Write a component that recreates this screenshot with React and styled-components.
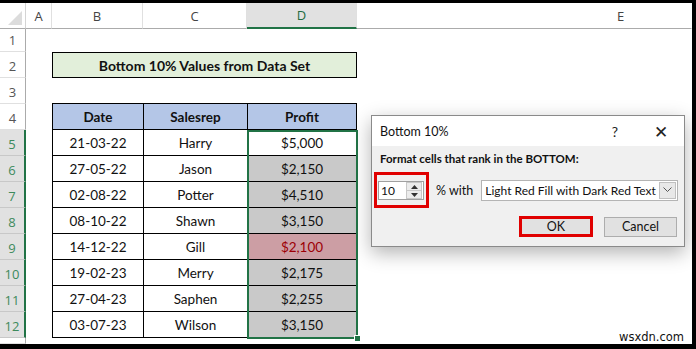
import React from "react";
import styled, { createGlobalStyle } from "styled-components";

const GlobalStyle = createGlobalStyle`
  html, body {
    margin: 0;
    padding: 0;
    background: #000;
  }
`;

const rows = [
  { date: "21-03-22", rep: "Harry", profit: "$5,000", kind: "plain" },
  { date: "27-05-22", rep: "Jason", profit: "$2,150", kind: "grey" },
  { date: "02-08-22", rep: "Potter", profit: "$4,510", kind: "grey" },
  { date: "08-10-22", rep: "Shawn", profit: "$3,150", kind: "grey" },
  { date: "14-12-22", rep: "Gill", profit: "$2,100", kind: "red" },
  { date: "19-02-23", rep: "Merry", profit: "$2,175", kind: "grey" },
  { date: "27-04-23", rep: "Saphen", profit: "$2,255", kind: "grey" },
  { date: "03-07-23", rep: "Wilson", profit: "$3,150", kind: "grey" },
];

const Frame = styled.div`
  width: 696px;
  height: 349px;
  background: #000;
  padding: 3px 4px 5px 0;
  box-sizing: border-box;
`;

const Screen = styled.div`
  position: relative;
  width: 100%;
  height: 100%;
  background: #fff;
  overflow: hidden;
  font-family: Lato, "Liberation Sans", sans-serif;
`;

const Sheet = styled.div`
  display: grid;
  grid-template-columns: 26px 26px 91px 104px 110px 1fr;
  grid-template-rows: 26px 23px repeat(11, 26px) 1fr;
  height: 100%;
`;

const Corner = styled.div`
  position: relative;
  border-right: 1px solid #d4d4d4;
  border-bottom: 1px solid #ababab;
  &::after {
    content: "";
    position: absolute;
    right: 3px;
    bottom: 3px;
    border-style: solid;
    border-width: 0 0 14px 14px;
    border-color: transparent transparent #dcdcdc transparent;
  }
`;

const ColHead = styled.div`
  display: flex;
  align-items: center;
  justify-content: ${(p) => (p.$wide ? "flex-start" : "center")};
  padding-left: ${(p) => (p.$wide ? "260px" : "0")};
  font-family: "Open Sans", "Liberation Sans", sans-serif;
  font-size: 13px;
  color: ${(p) => (p.$active ? "#1e6b3f" : "#444")};
  background: ${(p) => (p.$active ? "#e1e1e1" : "#fff")};
  border-right: 1px solid ${(p) => (p.$wide ? "transparent" : "#e0e0e0")};
  border-bottom: ${(p) => (p.$active ? "2px solid #217346" : "1px solid #ababab")};
  box-sizing: border-box;
`;

const RowHead = styled.div`
  grid-column: 1;
  display: flex;
  align-items: flex-end;
  justify-content: center;
  padding-bottom: 2px;
  box-sizing: border-box;
  font-family: "Open Sans", "Liberation Sans", sans-serif;
  font-size: 13px;
  color: ${(p) => (p.$active ? "#3d8a5c" : "#555")};
  background: ${(p) => (p.$active ? "#e1e1e1" : "#fff")};
  border-bottom: 1px solid ${(p) => (p.$active ? "#c8c8c8" : "#e0e0e0")};
  border-right: ${(p) => (p.$active ? "2px solid #217346" : "1px solid #ababab")};
`;

const TitleBox = styled.div`
  grid-column: 3 / span 3;
  grid-row: 3;
  display: flex;
  align-items: center;
  justify-content: center;
  background: #e2efda;
  border: 1px solid #000;
  font-size: 14px;
  font-weight: 700;
  color: #111;
`;

const Table = styled.div`
  position: relative;
  grid-column: 3 / span 3;
  grid-row: 5 / span 9;
  display: grid;
  grid-template-columns: 90px 103px 1fr;
  grid-auto-rows: 1fr;
  gap: 1px;
  padding: 1px;
  margin-top: -1px;
  background: #000;
  align-self: stretch;
`;

const cellBg = {
  head: "#b4c6e7",
  plain: "#fff",
  grey: "#c9c9c9",
  red: "#cc9ea4",
};

const Cell = styled.div`
  display: flex;
  align-items: center;
  justify-content: center;
  font-size: 13.5px;
  font-weight: ${(p) => (p.$kind === "head" ? 700 : 400)};
  color: ${(p) => (p.$kind === "red" ? "#9c0006" : "#111")};
  background: ${(p) => cellBg[p.$kind] || "#fff"};
`;

const Selection = styled.div`
  position: absolute;
  left: 195px;
  right: -1px;
  top: 27px;
  bottom: -1px;
  border: 2px solid #217346;
  pointer-events: none;
  &::after {
    content: "";
    position: absolute;
    right: -5px;
    bottom: -5px;
    width: 5px;
    height: 5px;
    background: #217346;
    border: 1px solid #fff;
  }
`;

const Dialog = styled.div`
  position: absolute;
  left: 371px;
  top: 112px;
  width: 314px;
  height: 132px;
  background: #f0f0f0;
  border: 1px solid #8a8a8a;
  box-shadow: 0 6px 18px rgba(0, 0, 0, 0.3);
  font-family: Lato, "Liberation Sans", sans-serif;
  font-size: 12px;
  color: #111;
  display: flex;
  flex-direction: column;
  box-sizing: border-box;
`;

const TitleBar = styled.div`
  height: 30px;
  background: #fff;
  display: flex;
  align-items: center;
  padding: 0 0 0 8px;
`;

const DialogTitle = styled.span`
  flex: 1;
  font-size: 12.5px;
`;

const TitleIcon = styled.span`
  width: 46px;
  text-align: center;
  font-size: ${(p) => p.$size || 14}px;
  color: #222;
`;

const Body = styled.div`
  flex: 1;
  display: flex;
  flex-direction: column;
  padding: 6px 7px 0 8px;
`;

const Prompt = styled.div`
  font-weight: 700;
  font-size: 11.5px;
  margin-bottom: 7px;
  white-space: nowrap;
`;

const OptionRow = styled.div`
  display: flex;
  align-items: center;
`;

const RedBox = styled.div`
  flex-shrink: 0;
  border: 3px solid #e00000;
  padding: 6px 2px 5px 1px;
  display: flex;
  margin-left: -6px;
`;

const Spinner = styled.div`
  width: 46px;
  height: 19px;
  background: #fff;
  border: 1px solid #a0a0a0;
  box-sizing: border-box;
  display: flex;
  align-items: center;
  padding-left: 2px;
  font-size: 12px;
`;

const SpinText = styled.span`
  flex: 1;
`;

const SpinButtons = styled.div`
  width: 14px;
  height: 15px;
  margin-right: 1px;
  display: flex;
  flex-direction: column;
  border: 1px solid #c8c8c8;
  background: #ececec;
`;

const SpinArrow = styled.div`
  flex: 1;
  display: flex;
  align-items: center;
  justify-content: center;
  border-top: ${(p) => (p.$down ? "1px solid #c8c8c8" : "none")};
`;

const WithLabel = styled.span`
  margin: 0 8px 0 7px;
  font-size: 12.5px;
  white-space: nowrap;
`;

const Select = styled.div`
  flex-shrink: 0;
  width: 197px;
  height: 21px;
  margin-left: auto;
  background: #fff;
  border: 1px solid #b4b4b4;
  box-sizing: border-box;
  display: flex;
  align-items: center;
  padding-left: 3px;
  font-size: 12px;
`;

const SelectText = styled.span`
  flex: 1;
  white-space: nowrap;
  overflow: hidden;
`;

const SelectArrow = styled.div`
  flex-shrink: 0;
  width: 17px;
  height: 17px;
  margin-right: 1px;
  border: 1px solid #c0c0c0;
  background: #e8e8e8;
  box-sizing: border-box;
  display: flex;
  align-items: center;
  justify-content: center;
`;

const ButtonRow = styled.div`
  display: flex;
  justify-content: flex-end;
  align-items: center;
  gap: 11px;
  margin-top: 8px;
`;

const Button = styled.div`
  width: ${(p) => (p.$marked ? 74 : 73)}px;
  height: ${(p) => (p.$marked ? 21 : 20)}px;
  background: #e1e1e1;
  border: ${(p) => (p.$marked ? "3px solid #e00000" : "1px solid #adadad")};
  box-sizing: border-box;
  display: flex;
  align-items: center;
  justify-content: center;
  font-size: 12.5px;
`;

const Watermark = styled.div`
  position: absolute;
  right: 8px;
  bottom: 0px;
  font-family: "DejaVu Sans", Verdana, sans-serif;
  font-size: 11.5px;
  color: #111;
`;

const Arrow = ({ down }) => (
  <svg width="7" height="4" viewBox="0 0 7 4">
    <path d={down ? "M0 0 L7 0 L3.5 4 Z" : "M0 4 L7 4 L3.5 0 Z"} fill="#333" />
  </svg>
);

const Chevron = () => (
  <svg width="9" height="6" viewBox="0 0 9 6">
    <path d="M0.5 0.5 L4.5 4.5 L8.5 0.5" fill="none" stroke="#555" strokeWidth="1" />
  </svg>
);

export default function App() {
  const rowNums = [1, 2, 3, 4, 5, 6, 7, 8, 9, 10, 11, 12, ""];
  return (
    <Frame>
      <GlobalStyle />
      <Screen>
        <Sheet>
          <Corner />
          <ColHead>A</ColHead>
          <ColHead>B</ColHead>
          <ColHead>C</ColHead>
          <ColHead $active>D</ColHead>
          <ColHead $wide>E</ColHead>
          {rowNums.map((n, i) => (
            <RowHead key={i} style={{ gridRow: i + 2 }} $active={n >= 5}>
              {n}
            </RowHead>
          ))}
          <TitleBox>Bottom 10% Values from Data Set</TitleBox>
          <Table>
            <Cell $kind="head">Date</Cell>
            <Cell $kind="head">Salesrep</Cell>
            <Cell $kind="head">Profit</Cell>
            {rows.map((r) => (
              <React.Fragment key={r.date}>
                <Cell>{r.date}</Cell>
                <Cell>{r.rep}</Cell>
                <Cell $kind={r.kind}>{r.profit}</Cell>
              </React.Fragment>
            ))}
            <Selection />
          </Table>
        </Sheet>

        <Dialog>
          <TitleBar>
            <DialogTitle>Bottom 10%</DialogTitle>
            <TitleIcon>?</TitleIcon>
            <TitleIcon $size={17}>✕</TitleIcon>
          </TitleBar>
          <Body>
            <Prompt>Format cells that rank in the BOTTOM:</Prompt>
            <OptionRow>
              <RedBox>
                <Spinner>
                  <SpinText>10</SpinText>
                  <SpinButtons>
                    <SpinArrow>
                      <Arrow />
                    </SpinArrow>
                    <SpinArrow $down>
                      <Arrow down />
                    </SpinArrow>
                  </SpinButtons>
                </Spinner>
              </RedBox>
              <WithLabel>% with</WithLabel>
              <Select>
                <SelectText>Light Red Fill with Dark Red Text</SelectText>
                <SelectArrow>
                  <Chevron />
                </SelectArrow>
              </Select>
            </OptionRow>
            <ButtonRow>
              <Button $marked>OK</Button>
              <Button>Cancel</Button>
            </ButtonRow>
          </Body>
        </Dialog>
        <Watermark>wsxdn.com</Watermark>
      </Screen>
    </Frame>
  );
}
